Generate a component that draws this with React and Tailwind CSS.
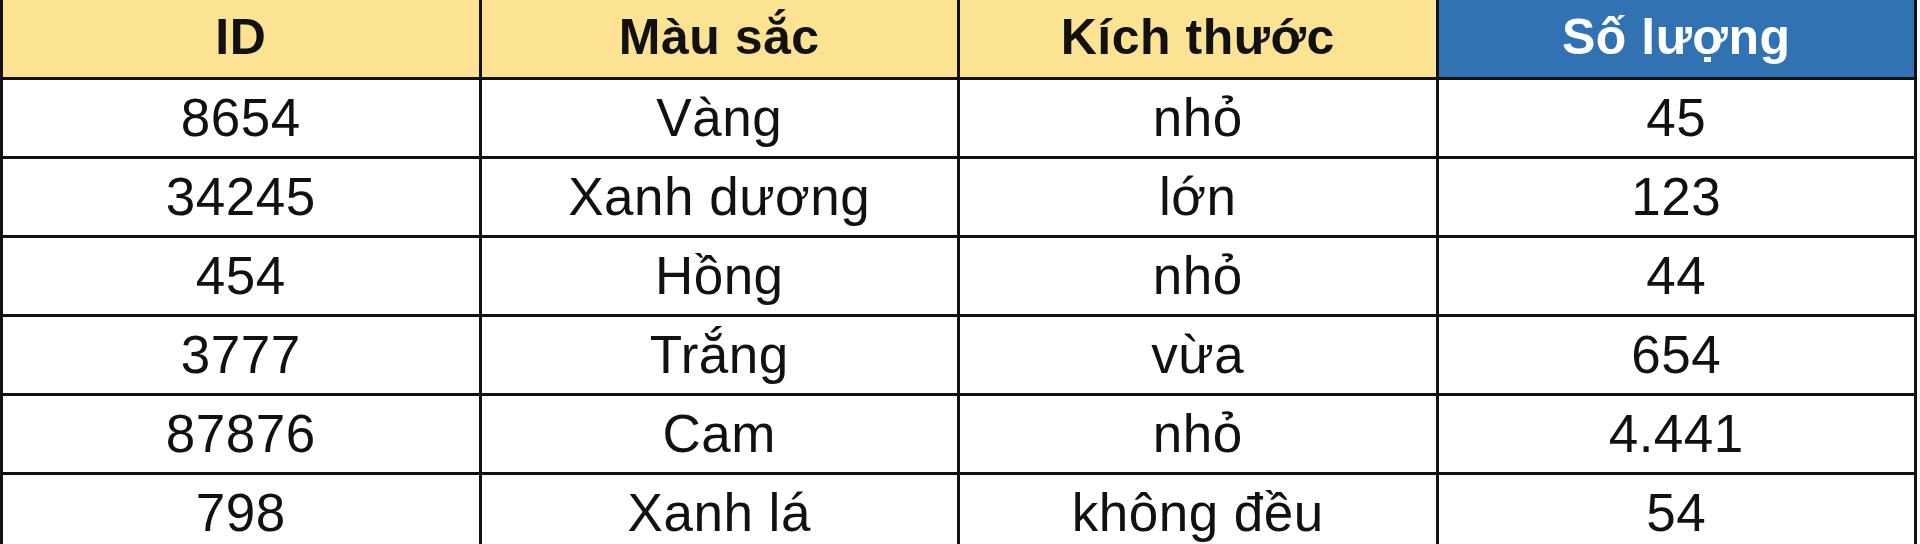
import React from "react";

const rows = [
  ["8654", "Vàng", "nhỏ", "45"],
  ["34245", "Xanh dương", "lớn", "123"],
  ["454", "Hồng", "nhỏ", "44"],
  ["3777", "Trắng", "vừa", "654"],
  ["87876", "Cam", "nhỏ", "4.441"],
  ["798", "Xanh lá", "không đều", "54"],
];

const headers = ["ID", "Màu sắc", "Kích thước", "Số lượng"];

export default function App() {
  return (
    <div className="h-[544px] w-[1920px] overflow-hidden bg-white">
      <div className="w-[1917px] border-l-[3px] border-[#111]">
        {/* Header */}
        <div className="grid grid-cols-4">
          {headers.map((h, i) => (
            <div
              key={h}
              className={
                "flex h-[80px] items-center justify-center border-b-[3px] border-r-[3px] border-[#111] pb-[2px] font-['Liberation_Sans',Arial,sans-serif] text-[50px] font-bold tracking-[0.5px] " +
                (i === 3 ? "bg-[#3172b3] text-white" : "bg-[#fce394] text-[#111]")
              }
            >
              {h}
            </div>
          ))}
        </div>

        {/* Rows */}
        {rows.map((r) => (
          <div key={r[0]} className="grid grid-cols-4">
            {r.map((c, j) => (
              <div
                key={j}
                className="flex h-[79px] items-center justify-center border-b-[3px] border-r-[3px] border-[#111] font-['Liberation_Sans',Arial,sans-serif] text-[53px] tracking-[0.5px] text-[#111]"
              >
                {c}
              </div>
            ))}
          </div>
        ))}
      </div>
    </div>
  );
}
